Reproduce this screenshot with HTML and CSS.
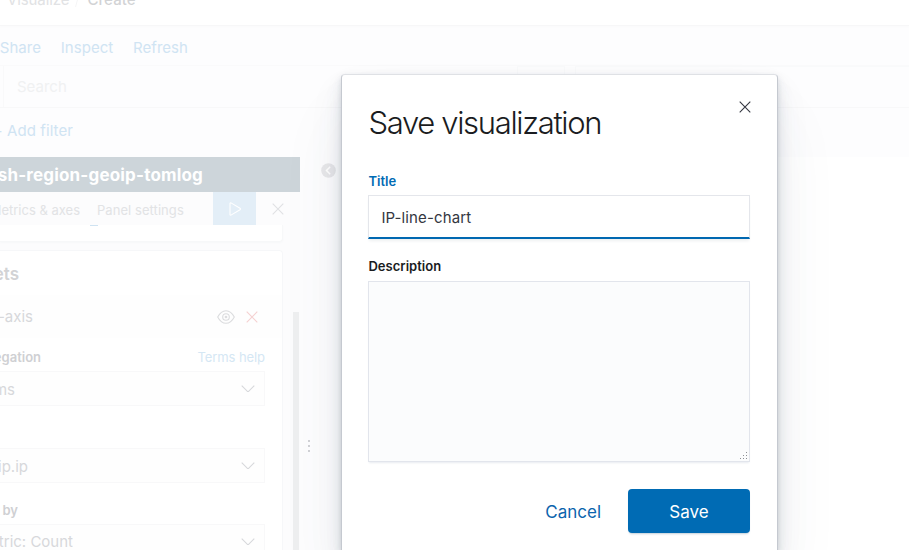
FILE: index.html
```html
<!DOCTYPE html>
<html lang="en">
<head>
<meta charset="utf-8">
<title>Save visualization</title>
<link rel="stylesheet" href="styles.css">
</head>
<body>
<div class="app">
  <header class="crumbs"><span>Visualize</span><i></i><b>Create</b></header>
  <nav class="menu"><a>Share</a><a>Inspect</a><a>Refresh</a></nav>
  <div class="query"><div class="search">Search</div><div class="lang"></div><div class="dates"></div></div>
  <div class="filters"><span class="clip">+ Add filter</span></div>
  <main class="editor">
    <section class="sidebar">
      <h2 class="index"><span class="clip">sh-region-geoip-tomlog</span></h2>
      <div class="tabs">
        <span class="clip metrics">Metrics &amp; axes</span><span class="panel-tab">Panel settings</span>
        <button class="apply"><svg width="16" height="16" viewBox="0 0 16 16"><path d="M3 2.5v11q0 1 1 .6l9-5.3q1-.8 0-1.5L4 1.900Q3 1.500 3 2.500z"/></svg></button>
        <svg class="discard" width="12" height="12" viewBox="0 0 12 12"><path d="M.7.700l10.600 10.600M11.300.700L.7 11.300"/></svg>
      </div>
      <div class="card-end"></div>
      <div class="card">
        <h3 class="clip buckets">Buckets</h3>
        <div class="axis"><span class="clip">X-axis</span>
          <svg class="eye" width="18" height="14" viewBox="0 0 18 14"><path d="M.7 7Q4 .7 9 .7T17.300 7Q14 13.300 9 13.300T.7 7z"/><circle cx="9" cy="7" r="3.300"/><circle cx="9" cy="7" r=".8"/></svg>
          <svg class="remove" width="12" height="12" viewBox="0 0 12 12"><path d="M.7.700l10.600 10.600M11.300.700L.7 11.300"/></svg>
        </div>
        <div class="label agg"><b class="clip">Aggregation</b><a>Terms help</a></div>
        <div class="select"><span class="clip w15">Terms</span><svg width="14" height="8" viewBox="0 0 14 8"><path d="M.7.700L6.200 6.200q.8.600 1.600 0L13.300.700"/></svg></div>
        <div class="select field"><span class="clip w28">geoip.ip</span><svg width="14" height="8" viewBox="0 0 14 8"><path d="M.7.700L6.200 6.200q.8.600 1.600 0L13.300.700"/></svg></div>
        <div class="label order"><b class="clip">Order by</b></div>
        <div class="select last"><span class="clip w73">Metric: Count</span><svg width="14" height="8" viewBox="0 0 14 8"><path d="M.7.700L6.200 6.200q.8.600 1.600 0L13.300.700"/></svg></div>
      </div>
      <div class="scrollbar"></div>
    </section>
    <section class="gutter">
      <svg class="collapse" width="15" height="15" viewBox="0 0 15 15"><circle cx="7.500" cy="7.500" r="7.300"/><path d="M9.200 3.700L5.500 7.500l3.700 3.800"/></svg>
      <div class="grip"><i></i><i></i><i></i></div>
    </section>
    <section class="canvas"></section>
  </main>
</div>
<div class="modal" role="dialog">
  <div class="modal-head"><h1>Save visualization</h1>
    <svg class="close" width="12" height="12" viewBox="0 0 12 12"><path d="M.7.700l10.600 10.600M11.300.700L.7 11.300"/></svg></div>
  <div class="form-label active">Title</div>
  <div class="input">IP-line-chart</div>
  <div class="form-label desc">Description</div>
  <div class="textarea"><svg width="8" height="8" viewBox="0 0 8 8"><path d="M6 0h1v1H6zM6 3h1v1H6zM3 3h1v1H3zM6 6h1v1H6zM3 6h1v1H3zM0 6h1v1H0z"/></svg></div>
  <div class="actions"><a>Cancel</a><button>Save</button></div>
</div>
</body>
</html>
```
FILE: styles.css
```css
* { box-sizing: border-box; }
body { margin: 0; width: 909px; height: 550px; overflow: hidden; position: relative; font: 15px/20px Inter, "Liberation Sans", sans-serif; background: #fdfdfe; color: #d5d6d9; }
h1, h2, h3 { margin: 0; }
button { border: 0; padding: 0; font: inherit; }
svg { fill: none; stroke: currentColor; stroke-width: 1.1; display: block; flex: none; }
.app { height: 550px; display: flex; flex-direction: column; overflow: hidden; }
.clip { display: flex; justify-content: flex-end; overflow: hidden; white-space: nowrap; flex: none; }
.crumbs { height: 26px; flex: none; display: flex; line-height: 20px; padding-left: 7px; background: #fff; border-bottom: 1px solid #f7f7f8; color: #e1e2e4; box-shadow: 0 1px 2px #fafafb; }
.crumbs span, .crumbs b { margin-top: -10px; }
.crumbs span { letter-spacing: -.1px; }
.crumbs b { font-weight: 500; color: #d2d3d5; margin-left: 10px; letter-spacing: .1px; }
.crumbs i { width: 1px; height: 7px; background: #f5f5f6; margin-left: 7px; transform: skewX(-15deg); }
.menu { height: 40px; flex: none; display: flex; gap: 20px; padding-top: 12px; color: #d0e4f3; border-bottom: 1px solid #fafafb; }
.menu a { margin-left: -.3px; letter-spacing: .05px; }
.query { height: 42px; flex: none; display: flex; border-bottom: 1px solid #f8f8f9; }
.search { width: 514px; margin-left: 3px; border-left: 1px solid #f9f9fa; padding: 11px 0 0 13px; color: #f0f1f2; }
.lang { width: 48px; border: 1px solid #f9fafb; border-bottom: 0; }
.dates { flex: 1; margin-left: 10px; border: 1px solid #f9fafb; border-width: 1px 0 0 1px; }
.filters { height: 49px; flex: none; color: #d0e4f3; padding-top: 13px; }
.filters .clip { width: 73px; letter-spacing: .08px; }
.editor { flex: 1; display: flex; min-height: 0; }
.sidebar { width: 300px; height: 393px; position: relative; background: #fcfcfd; overflow: hidden; flex: none; }
.index { height: 35px; background: #cdd5da; color: #fff; font-size: 17px; line-height: 36px; font-weight: 700; }
.index .clip { width: 203px; letter-spacing: .18px; }
.tabs { height: 33px; display: flex; align-items: center; font-size: 13px; color: #e2e3e5; }
.tabs .metrics { width: 80px; padding-top: 3px; }
.panel-tab { width: 87px; margin: 3px 29px 0 17px; white-space: nowrap; letter-spacing: .06px; }
.apply { width: 43px; height: 33px; background: #e3eef7; color: #fff; display: flex; align-items: center; justify-content: center; }
.discard { margin-left: 16px; color: #e0e1e4; }
.card-end { height: 17px; width: 283px; background: #fff; border: 1px solid #f7f8f9; border-width: 0 1px 1px 0; border-radius: 0 0 4px 0; box-shadow: 0 1px 2px #f7f8f9; }
.card-end::before { content: ""; display: block; width: 8px; height: 1px; margin-left: 90px; background: #cfe3f2; }
.card { margin-top: 8px; width: 283px; height: 300px; background: #fff; border: 1px solid #f6f7f9; border-width: 1px 1px 0 0; border-radius: 0 4px 0 0; padding-top: 13px; overflow: hidden; }
.buckets { width: 19px; font-size: 17px; line-height: 21px; font-weight: 600; color: #d2d3d5; }
.axis { height: 43px; margin-top: 10px; display: flex; align-items: center; background: #fefefe; color: #d7d8db; }
.axis .clip { width: 33px; }
.eye { margin-left: 184px; color: #dbdcde; }
.remove { margin-left: 11px; color: #f5d1d1; }
.label { height: 20px; display: flex; justify-content: space-between; font-size: 13px; color: #cfd0d3; width: 265px; }
.label b { font-weight: 600; }
.agg { margin-top: 9px; }
.agg .clip { width: 41px; }
.agg a { color: #d5e7f4; letter-spacing: -.08px; }
.select { height: 35px; width: 265px; border: 1px solid #f8f8f9; border-left: 0; display: flex; justify-content: space-between; align-items: center; padding-right: 9px; background: #fefefe; color: #d7d8db; margin-top: 4px; }
.select .clip { padding-top: 2px; }
.select.last .clip { padding-top: 0; }
.w15 { width: 15px; } .w28 { width: 28px; } .w73 { width: 73px; }
.select.field { margin-top: 42px; }
.order { margin-top: 17px; }
.order .clip { width: 18px; }
.scrollbar { position: absolute; left: 293px; top: 155px; width: 6px; bottom: 0; background: #eeeff0; }
.gutter { width: 41px; padding-left: 5px; background: #fdfdfe; }
.collapse { margin: 6px 0 0 16px; fill: #e8e8ea; stroke: none; }
.collapse path { fill: none; stroke: #fff; stroke-width: 1.500; }
.grip { margin: 262px 0 0 3px; display: flex; flex-direction: column; gap: 3px; }
.grip i { width: 2px; height: 2px; background: #d1d2d5; }
.canvas { flex: 1; background: #fff; }
.modal { position: absolute; left: 341px; top: 74px; width: 437px; height: 476px; padding: 0 27px; background: #fff; border: 1px solid #dfe1e5; border-color: #dfe1e5 #c5c9d0; border-bottom: 0; border-radius: 4px 4px 0 0; box-shadow: 0 44px 70px rgba(65,78,101,.06), 0 18px 34px rgba(65,78,101,.08), 0 9px 17px rgba(65,78,101,.09), 0 4px 9px rgba(65,78,101,.1), 0 2px 4px rgba(65,78,101,.1); color: #343741; }
.modal-head { height: 96px; display: flex; justify-content: space-between; padding-top: 26px; }
h1 { margin-left: -.5px; font-size: 31px; line-height: 44px; font-weight: 300; letter-spacing: -1.33px; color: #1a1c21; white-space: nowrap; }
.close { color: #343741; margin-right: -1px; }
.form-label { margin-left: -.6px; font-size: 13px; line-height: 20px; font-weight: 600; color: #1a1c21; letter-spacing: .03px; }
.form-label.active { color: #006bb4; }
.input { margin: 4px -1px 0; width: 382px; height: 44px; border: 1px solid #e4e6eb; border-bottom: 2px solid #0068b1; line-height: 43px; padding-left: 12.4px; font-size: 15px; letter-spacing: .12px; box-shadow: 0 3px 3px -1px #eef0f1; }
.desc { margin-top: 17px; }
.textarea { margin: 5px -1px 0; width: 382px; height: 181px; background: #fbfcfd; border: 1px solid #e2e5ec; box-shadow: 0 2px 2px -1px #e8ebf0; display: flex; align-items: flex-end; justify-content: flex-end; padding: 1px 1px; }
.textarea svg { fill: #8d9095; stroke: none; }
.actions { display: flex; justify-content: flex-end; align-items: center; margin: 27px 0 0 0; font-size: 17px; color: #0b64ad; }
.actions a { padding-top: 2px; }
.actions button { width: 122px; height: 44px; margin-left: 27px; background: #006bb4; color: #fff; border-radius: 4px; box-shadow: 0 2px 2px -1px rgba(54,97,126,.3); padding-top: 1px; }
```
